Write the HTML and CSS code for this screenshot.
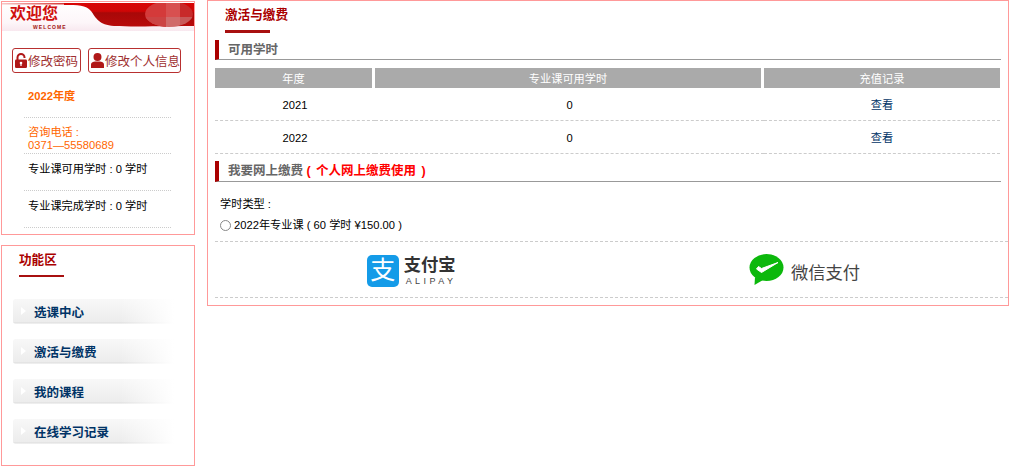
FILE: index.html
```html
<!DOCTYPE html>
<html lang="zh-CN">
<head>
  <meta charset="UTF-8">
  <title>激活与缴费</title>
  <link rel="stylesheet" href="styles.css">
</head>
<body>
  <div class="side">
    <div class="panel welcome">
      <div class="banner">
        <svg class="banner-bg" width="192" height="28" viewBox="0 0 192 28">
          <defs>
            <linearGradient id="bannerRed" x1="0" y1="0" x2="0" y2="1">
              <stop offset="0" stop-color="#d80404"/>
              <stop offset="0.35" stop-color="#d00606"/>
              <stop offset="0.42" stop-color="#a80808"/>
              <stop offset="1" stop-color="#b80a0a"/>
            </linearGradient>
            <linearGradient id="bannerPink" x1="0" y1="0" x2="0" y2="1">
              <stop offset="0" stop-color="#ffffff"/>
              <stop offset="0.7" stop-color="#fdf6f9"/>
              <stop offset="1" stop-color="#f8e8ef"/>
            </linearGradient>
            <linearGradient id="bannerTop" x1="0" y1="0" x2="1" y2="0">
              <stop offset="0" stop-color="#f8c8c8"/>
              <stop offset="1" stop-color="#d01010"/>
            </linearGradient>
            <clipPath id="bannerSpot">
              <ellipse cx="167" cy="11" rx="24" ry="13"/>
            </clipPath>
          </defs>
          <rect width="192" height="28" fill="url(#bannerPink)"/>
          <rect width="78" height="1.500" fill="url(#bannerTop)"/>
          <path d="M62 0V2C76 2 84 2 89 8C94 15 97 22 112 23C130 24 170 23 192 23V0Z" fill="url(#bannerRed)"/>
          <g clip-path="url(#bannerSpot)">
            <rect x="140" y="0" width="24" height="24" fill="#d43a3a"/>
            <rect x="164" y="0" width="14" height="14" fill="#d85050"/>
            <rect x="164" y="14" width="14" height="10" fill="#d06a6a"/>
            <rect x="178" y="0" width="14" height="14" fill="#c82a2a"/>
            <rect x="178" y="14" width="14" height="10" fill="#c85858"/>
            <rect x="140" y="14" width="24" height="10" fill="#cc4444"/>
          </g>
        </svg>
        <div class="banner-title">欢迎您</div>
        <div class="banner-sub">WELCOME</div>
      </div>
      <div class="btn-row">
        <a class="btn btn-pwd">
          <svg width="12" height="15" viewBox="0 0 12 15">
            <path d="M2.500 7V4.500a3.500 3.500 0 0 1 7 0V5" fill="none" stroke="#b01818" stroke-width="2"/>
            <rect x="0" y="6.500" width="12" height="8.500" rx="1.200" fill="#b01818"/>
            <circle cx="6" cy="10" r="1.300" fill="#fff"/>
            <rect x="5.400" y="10.500" width="1.200" height="2.500" fill="#fff"/>
          </svg>
          修改密码
        </a>
        <a class="btn btn-info">
          <svg width="13" height="15" viewBox="0 0 13 15">
            <circle cx="6.500" cy="4" r="4" fill="#b01818"/>
            <path d="M0 15V11.500C0 9 3 8.500 6.500 8.500S13 9 13 11.500V15Z" fill="#b01818"/>
          </svg>
          修改个人信息
        </a>
      </div>
      <ul class="info">
        <li class="info-year">2022年度</li>
        <li class="info-phone">咨询电话 :<br>0371—55580689</li>
        <li class="info-hours">专业课可用学时 : 0 学时</li>
        <li class="info-hours">专业课完成学时 : 0 学时</li>
      </ul>
    </div>

    <div class="panel func">
      <div class="func-title">功能区</div>
      <div class="func-line"></div>
      <div class="menu">
        <a class="menu-item">选课中心</a>
        <a class="menu-item">激活与缴费</a>
        <a class="menu-item">我的课程</a>
        <a class="menu-item">在线学习记录</a>
      </div>
    </div>
  </div>

  <div class="panel main">
    <div class="main-title">激活与缴费</div>
    <div class="main-line"></div>

    <h2 class="sec-head">可用学时</h2>
    <table class="hours">
      <tr>
        <th class="col-year">年度</th>
        <th class="col-hours">专业课可用学时</th>
        <th class="col-log">充值记录</th>
      </tr>
      <tr>
        <td>2021</td>
        <td>0</td>
        <td><a class="link">查看</a></td>
      </tr>
      <tr>
        <td>2022</td>
        <td>0</td>
        <td><a class="link">查看</a></td>
      </tr>
    </table>

    <h2 class="sec-head sec-pay">我要网上缴费 <span class="sec-note">( 个人网上缴费使用 )</span></h2>
    <div class="pay-form">
      <div class="pay-label">学时类型 :</div>
      <label class="pay-option"><input type="radio" name="course"> 2022年专业课 ( 60 学时 ¥150.00 )</label>
    </div>
    <div class="pay-logos">
      <div class="logo-cell logo-ali">
        <div class="ali-mark">支</div>
        <div class="ali-text">
          <div class="ali-cn">支付宝</div>
          <div class="ali-en">ALIPAY</div>
        </div>
      </div>
      <div class="logo-cell logo-wx">
        <svg width="35" height="31" viewBox="0 0 35 31">
          <ellipse cx="17.500" cy="13.500" rx="17" ry="13.500" fill="#0cb80c"/>
          <path d="M6 23L5.500 31L14 26Z" fill="#0cb80c"/>
          <path d="M7.500 15L12.500 18.500L29 8.500L12.500 14.500L9.500 12.500Z" fill="#fff" stroke="#fff" stroke-width="1"/>
        </svg>
        <div class="wx-text">微信支付</div>
      </div>
    </div>
  </div>
</body>
</html>
```

FILE: styles.css
```css
html, body {
  margin: 0;
  padding: 0;
  height: 466px;
  overflow: hidden;
}
body {
  display: flex;
  align-items: flex-start;
  background-color: white;
  color: #000;
  font-family: "Liberation Sans", "Noto Sans CJK SC", sans-serif;
  font-size: 11.2px;
}
.panel {
  box-sizing: border-box;
  border: 1px solid #f99;
  background-color: white;
}
.side {
  width: 194px;
  margin: 1px 0 0 1px;
}

/* 欢迎 */
.welcome {
  height: 234px;
}
.banner {
  position: relative;
  height: 28px;
  margin: 1px 0 0;
  overflow: hidden;
}
.banner-bg {
  position: absolute;
  left: 0;
  top: 0;
}
.banner-title {
  position: relative;
  padding: 1px 0 0 8px;
  color: #d01010;
  font-size: 16px;
  font-weight: bold;
  line-height: 20px;
}
.banner-sub {
  position: relative;
  padding-left: 31px;
  color: #a01010;
  font-size: 5px;
  font-weight: bold;
  line-height: 6px;
  letter-spacing: 1.1px;
}
.btn-row {
  display: flex;
  gap: 7px;
  margin: 17px 0 0 10px;
}
.btn {
  box-sizing: border-box;
  display: flex;
  align-items: center;
  gap: 1px;
  height: 25px;
  padding-left: 2px;
  border: 1px solid #b83030;
  border-radius: 3px;
  color: #a03030;
  font-size: 12.5px;
  white-space: nowrap;
}
.btn-pwd {
  width: 69px;
}
.btn-info {
  width: 93px;
}
.info {
  list-style-type: none;
  margin: 0 0 0 22px;
  padding: 0;
  width: 147px;
}
.info li {
  box-sizing: border-box;
  padding-left: 4px;
  border-bottom: 1px dotted #ccc;
}
.info-year {
  height: 45px;
  padding-top: 15px;
  color: #f60;
  font-weight: bold;
  line-height: 16px;
}
.info-phone {
  height: 36px;
  padding-top: 8px;
  color: #f60;
  line-height: 13px;
}
.info-hours {
  height: 37px;
  padding-top: 7px;
  line-height: 16px;
}

/* 功能区 */
.func {
  height: 221px;
  margin-top: 10px;
}
.func-title {
  padding: 6px 0 0 17px;
  color: #a00;
  font-size: 12.6px;
  font-weight: bold;
  line-height: 16px;
}
.func-line {
  width: 45px;
  height: 2px;
  margin: 7px 0 0 17px;
  background-color: #a81010;
}
.menu {
  display: flex;
  flex-direction: column;
  gap: 15px;
  margin: 22px 0 0 11px;
}
.menu-item {
  position: relative;
  box-sizing: border-box;
  display: block;
  width: 164px;
  height: 25px;
  padding-left: 21px;
  border-radius: 3px;
  background:
    linear-gradient(to right, rgba(255, 255, 255, 0) 65%, white 98%),
    linear-gradient(to bottom, #f8f8f8, #ececec 92%, #dcdcdc 96%, #fff);
  color: #036;
  font-size: 12.5px;
  font-weight: bold;
  line-height: 28px;
}
.menu-item::before {
  content: "";
  position: absolute;
  left: 8px;
  top: 8px;
  border-left: 5px solid #fff;
  border-top: 4px solid transparent;
  border-bottom: 4px solid transparent;
}

/* 主体 */
.main {
  width: 802px;
  height: 306px;
  margin-left: 12px;
  padding-left: 7px;
}
.main-title {
  height: 29px;
  padding-left: 10px;
  color: #a00;
  font-size: 12.6px;
  font-weight: bold;
  line-height: 29px;
}
.main-line {
  width: 45px;
  height: 3px;
  margin-left: 10px;
  background-color: #a81010;
}
.sec-head {
  box-sizing: border-box;
  width: 786px;
  height: 20px;
  margin: 7px 0 8px;
  padding-left: 9px;
  border-left: 4px solid #a00;
  border-bottom: 1px solid #999;
  color: #666;
  font-size: 12.5px;
  font-weight: bold;
  line-height: 20px;
}
.sec-note {
  color: #f00;
  word-spacing: 2px;
}
.sec-pay {
  margin-bottom: 0;
  height: 21px;
}
.hours {
  width: 785px;
  table-layout: fixed;
  border-collapse: separate;
  border-spacing: 0;
}
.hours th {
  height: 19px;
  padding: 0 0 1px;
  border-right: 3px solid white;
  background-color: #aaa;
  background-clip: padding-box;
  color: white;
  font-weight: normal;
}
.hours th.col-log {
  border-right: 0;
}
.col-year {
  width: 157px;
}
.col-hours {
  width: 386px;
}
.hours td {
  height: 31px;
  padding: 1px 0 0;
  border-bottom: 1px dashed #ccc;
  line-height: 16px;
  text-align: center;
}
.link {
  color: #036;
}
.pay-form {
  height: 60px;
  padding: 12px 0 0 5px;
  box-sizing: border-box;
  line-height: 21px;
  border-bottom: 1px dashed #ccc;
}
.pay-option {
  display: flex;
  align-items: center;
  gap: 3px;
}
.pay-option input {
  appearance: none;
  box-sizing: border-box;
  width: 11px;
  height: 11px;
  margin: 0;
  border: 1px solid #888;
  border-radius: 50%;
  background-color: white;
}
.pay-logos {
  display: grid;
  grid-template-columns: 393px 393px;
  height: 56px;
  box-sizing: border-box;
  border-bottom: 1px dashed #ccc;
}
.logo-cell {
  display: flex;
  align-items: center;
  justify-content: center;
}
.logo-ali {
  gap: 5px;
  padding-top: 3px;
}
.logo-wx {
  gap: 7px;
}
.ali-mark {
  width: 32px;
  height: 32px;
  border-radius: 5px;
  background-color: #149be8;
  color: white;
  font-size: 25px;
  line-height: 31px;
  text-align: center;
}
.ali-cn {
  color: #333;
  font-size: 17.3px;
  font-weight: bold;
  line-height: 20px;
}
.ali-en {
  padding-left: 2px;
  color: #444;
  font-size: 9px;
  line-height: 12px;
  letter-spacing: 3.4px;
  white-space: nowrap;
}
.wx-text {
  padding-top: 3px;
  color: #444;
  font-size: 17.3px;
}
```
